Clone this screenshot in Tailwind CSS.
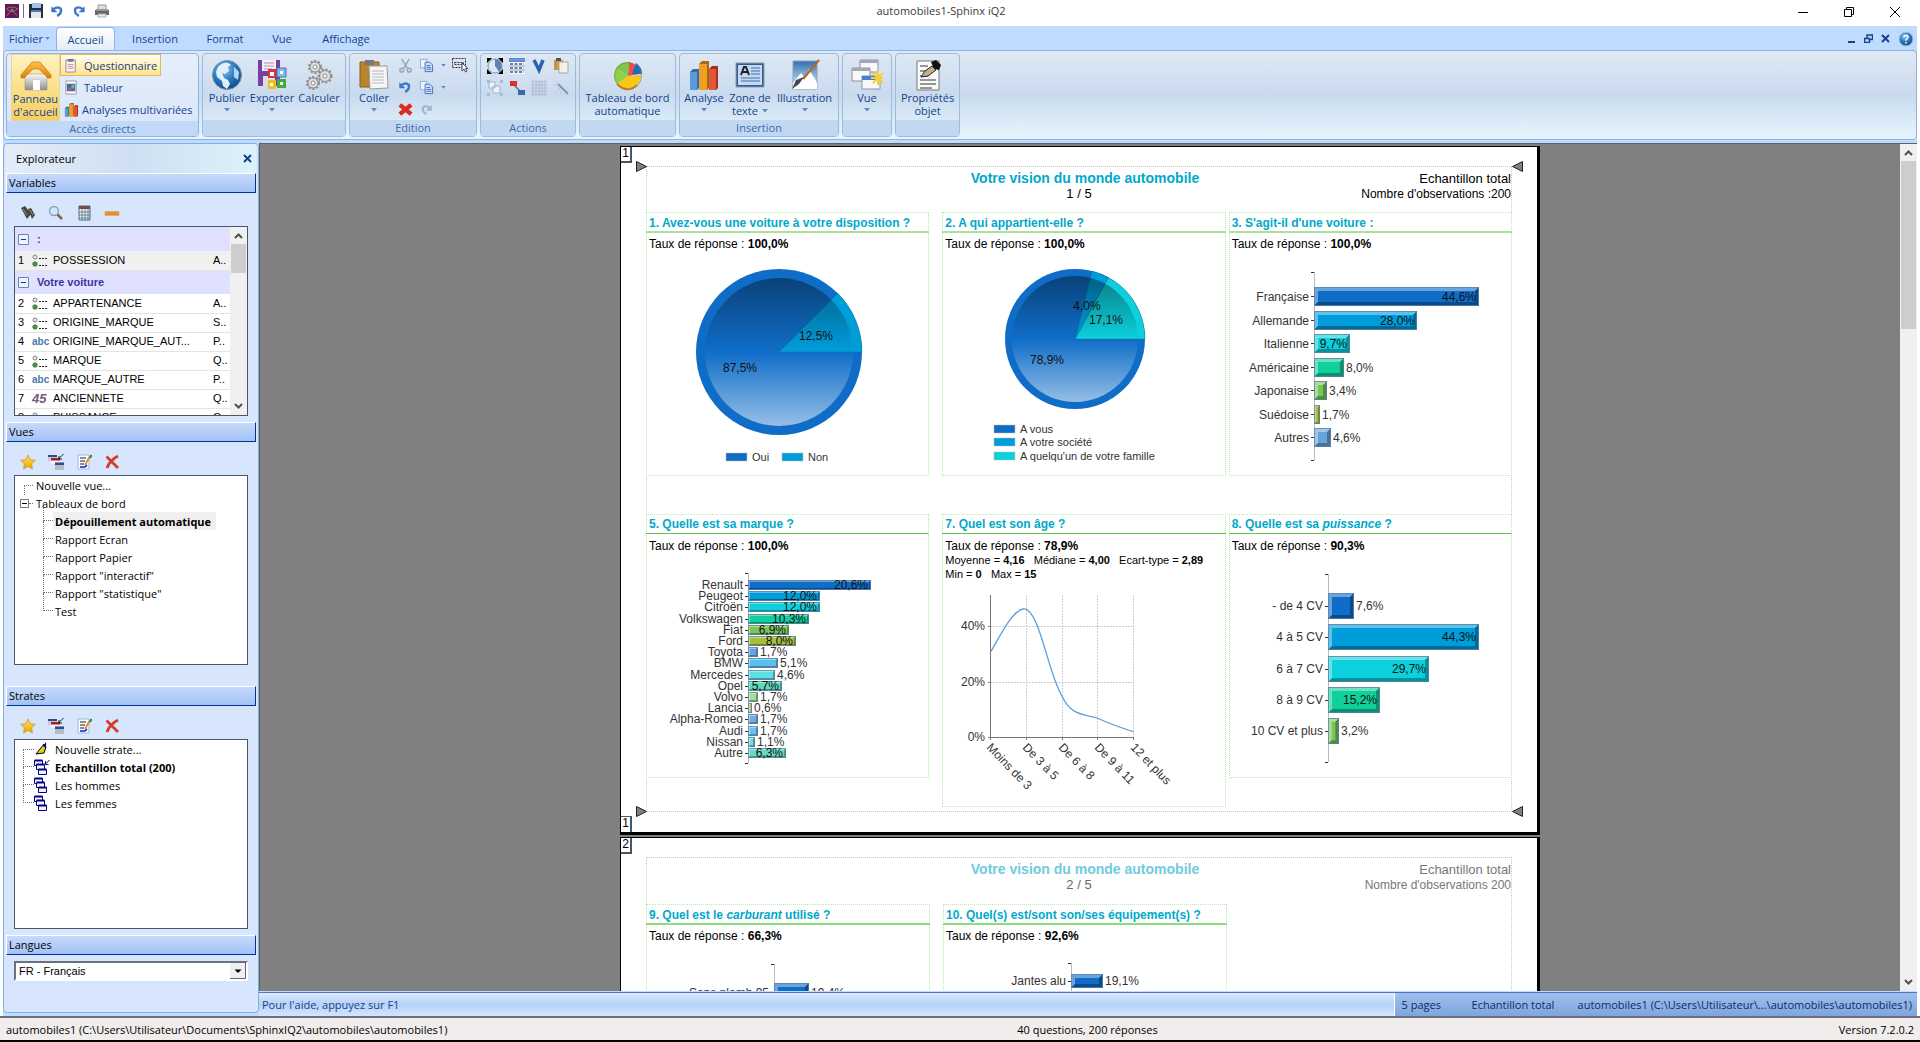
<!DOCTYPE html>
<html lang="fr">
<head>
    <meta charset="UTF-8">
    <meta name="viewport" content="width=device-width, initial-scale=1.0">
    <title>automobiles1-Sphinx iQ2</title>
    <script src="https://cdn.jsdelivr.net/npm/@tailwindcss/browser@4"></script>
</head>
<body class="h-screen flex flex-col overflow-hidden bg-white text-[11px] leading-[13px] text-black font-['Open_Sans','Noto_Sans',sans-serif]">

    <!-- Shared icons -->
    <svg class="absolute w-0 h-0">
        <defs>
            <linearGradient id="gold" x1="0" y1="0" x2="0" y2="1"><stop offset="0" stop-color="#ffe066"/><stop offset="1" stop-color="#f0a500"/></linearGradient>
            <linearGradient id="orange" x1="0" y1="0" x2="0" y2="1"><stop offset="0" stop-color="#ffc04d"/><stop offset="1" stop-color="#e08200"/></linearGradient>
            <linearGradient id="grey" x1="0" y1="0" x2="0" y2="1"><stop offset="0" stop-color="#fafafa"/><stop offset="1" stop-color="#8e8e8e"/></linearGradient>
            <linearGradient id="sky" x1="0" y1="0" x2="0" y2="1"><stop offset="0" stop-color="#2f6fb0"/><stop offset="1" stop-color="#e8f4ff"/></linearGradient>
            <radialGradient id="globe" cx=".4" cy=".3" r=".8"><stop offset="0" stop-color="#8cc8f4"/><stop offset=".5" stop-color="#2a78bd"/><stop offset="1" stop-color="#0c3f7c"/></radialGradient>
            <linearGradient id="gloss" x1="0" y1="0" x2="0" y2="1"><stop offset="0" stop-color="#000" stop-opacity=".4"/><stop offset=".5" stop-color="#000" stop-opacity="0"/><stop offset=".5" stop-color="#fff" stop-opacity="0"/><stop offset="1" stop-color="#fff" stop-opacity=".56"/></linearGradient>
        </defs>
        <symbol id="i-arrow" viewBox="0 0 6 4"><path d="M0 0h6L3 3.5z" fill="#5a8ac6"/></symbol>
        <symbol id="i-undo" viewBox="0 0 16 16"><path d="M3 6.500C8 2 13.500 4 12.500 8.500Q12 12 8 13.500" fill="none" stroke="#3f78c8" stroke-width="2.800"/><path d="M1.500 2.500v7h7z" fill="#3f78c8"/></symbol>
        <symbol id="i-redo" viewBox="0 0 16 16"><path d="M13 6.500C8 2 2.500 4 3.500 8.500Q4 12 8 13.500" fill="none" stroke="currentColor" stroke-width="2.600"/><path d="M14.500 2.500v7h-7z" fill="currentColor"/></symbol>
        <symbol id="i-copy" viewBox="0 0 16 16"><path d="M1.500 1.500h7v9h-7z" fill="#eef5ff" stroke="#8aa8d8"/><path d="M6.500 4.500h5l3 3v7h-8z" fill="#cfe0fb" stroke="#3f6fc0"/><path d="M8 8h4M8 10h5M8 12h5" stroke="#3f6fc0"/></symbol>
        <symbol id="i-bars" viewBox="0 0 32 32"><path d="M2 13l3-3h6v19l-2 2H2z" fill="#2f6fae"/><path d="M2 13h7v18H2z" fill="#5b9bd6"/><path d="M11 5l3-3h7v27l-2 2h-8z" fill="#a86a0c"/><path d="M11 5h8v26h-8z" fill="#eda024"/><path d="M21 10l3-3h6v22l-2 2h-7z" fill="#a8301a"/><path d="M21 10h7v21h-7z" fill="#e2553a"/></symbol>
        <symbol id="i-clip" viewBox="0 0 16 16"><path d="M2 2h10v13H2z" fill="#f4f4f4" stroke="#8a8a8a"/><path d="M4 1h6v3H4z" fill="#777"/><path d="M4 7h6M4 9h6M4 11h6" stroke="#e08a8a"/></symbol>
        <symbol id="i-star" viewBox="0 0 16 16"><path d="M8 1l2.200 4.700 5.100.6-3.800 3.500 1 5.100L8 12.400l-4.500 2.500 1-5.100L.7 6.300l5.100-.6z" fill="url(#gold)" stroke="#c89a1c" stroke-width=".8"/></symbol>
        <symbol id="i-wins" viewBox="0 0 16 16"><path d="M0 1h9v6H0z" fill="#c8cdd8"/><path d="M0 1h9v2H0z" fill="#2c4a8c"/><path d="M3 4h9v6H3z" fill="#f4f4f4"/><path d="M3 4h9v2.500H3z" fill="#9c2020"/><path d="M7 9h9v7H7z" fill="#b8bcc4"/><path d="M7 8.500h9V11H7z" fill="#2c4a8c"/><path d="M15.500 0l-4 4M11 2v3h3" stroke="#222" fill="none"/></symbol>
        <symbol id="i-edit" viewBox="0 0 16 16"><path d="M2 1h11v14H2z" fill="#f7fbff" stroke="#9ab8dc"/><path d="M4 4h6M4 7h5M4 10h4" stroke="#222" stroke-width="1.200"/><path d="M4 13h5l2-2" stroke="#1414e0" fill="none" stroke-width="1.500"/><path d="M13.500 3L9 11" stroke="#e88a1c" stroke-width="2"/><path d="M14 4l1.500-3" stroke="#2f8a3c" stroke-width="2"/></symbol>
        <symbol id="i-del" viewBox="0 0 16 16"><path d="M2.500 2.500L14 14M14 2Q6 6 3 14" stroke="#d23c2c" stroke-width="2.800" fill="none"/></symbol>
        <symbol id="i-single" viewBox="0 0 16 14"><circle cx="3" cy="4" r="2" fill="#ececec" stroke="#666" stroke-width=".8"/><circle cx="3" cy="11" r="2.300" fill="#3a9a4a" stroke="#226a2e" stroke-width=".6"/><path d="M7 5.500h2m1 0h2m1 0h2M7 12.500h2m1 0h2m1 0h2" stroke="#222"/></symbol>
        <symbol id="i-box" viewBox="0 0 11 11"><path d="M.5.5h10v10H.5z" fill="#eef4ff" stroke="#6e86b4"/><path d="M3 5.500h5" stroke="#1c3a7a"/></symbol>
        <symbol id="i-strate" viewBox="0 0 14 16"><g fill="#f4f4f4" stroke="#00008b"><path d="M.5 1.500h8v5h-8z"/><path d="M.5 1.500h8" stroke-width="2"/><path d="M2.500 5.500h8v5h-8z"/><path d="M2.500 5.500h8" stroke-width="2"/><path d="M4.500 10.500h8v5h-8z"/><path d="M4.500 10.500h8" stroke-width="2"/></g></symbol>
    </svg>

    <!-- Title bar -->
    <header class="grid grid-cols-[1fr_auto_1fr] items-start h-[26px] shrink-0">
        <div class="flex items-center gap-[6px] pl-[5px] pt-[3px]">
            <svg class="size-[14px]" viewBox="0 0 14 14"><path d="M0 0h14v14H0z" fill="#5e1a5c"/><path d="M1 5q6-4 12 0M2 5.500q5 4 10 0M5 8l-3 4M8 8l4 3" stroke="#c8603c" fill="none"/><circle cx="7" cy="6" r="1.500" fill="#2c9ab4"/></svg>
            <span class="w-px h-[14px] bg-gray-500 -ml-0.5"></span>
            <button class="-ml-0.5" aria-label="Enregistrer"><svg class="size-4" viewBox="0 0 16 16"><path d="M1 1h14v14H1z" fill="#2b3038"/><path d="M4 0h9v5H4z" fill="#9ec4e8"/><path d="M3 7h10v3H3z" fill="#3f7ec0"/><path d="M3 9h10v6H3z" fill="#e4e8ec"/></svg></button>
            <button aria-label="Annuler"><svg class="size-[14px]"><use href="#i-undo"/></svg></button>
            <button class="ml-0.5 text-[#3f78c8]" aria-label="Rétablir"><svg class="size-[14px]"><use href="#i-redo"/></svg></button>
            <button class="ml-0.5" aria-label="Imprimer"><svg class="size-4" viewBox="0 0 16 16"><path d="M4 2h8v5H4z" fill="#ddd" stroke="#999"/><path d="M1 7h14v5H1z" fill="#666"/><path d="M2 6h12v2H2z" fill="#999"/><path d="M4 11h8v3H4z" fill="#eee" stroke="#aaa"/></svg></button>
        </div>
        <h1 class="pt-[4px] pr-[38px] text-[#3a3a3a]">automobiles1-Sphinx iQ2</h1>
        <div class="flex justify-end gap-[32px] pr-[18px] pt-[5px]">
            <button aria-label="Réduire"><svg class="size-[14px]" viewBox="0 0 14 14"><path d="M2 7.500h10" stroke="#000"/></svg></button>
            <button aria-label="Restaurer"><svg class="size-[14px]" viewBox="0 0 14 14"><path d="M2.500 4.500h7v7h-7zM4.500 4.500v-2h7v7h-2" stroke="#000" fill="none"/></svg></button>
            <button aria-label="Fermer"><svg class="size-[14px]" viewBox="0 0 14 14"><path d="M2 2l10 10M12 2L2 12" stroke="#000"/></svg></button>
        </div>
    </header>

    <div class="flex flex-col flex-1 min-h-0 ml-[3px] mr-[3px] bg-[#bfdbff]">

        <!-- Ribbon tabs -->
        <nav class="flex h-[24px] shrink-0 text-[#15428b] pl-[6px] pt-px">
            <button class="flex items-center gap-0.5 w-[47px]">Fichier<svg class="w-[5px] h-[3px]"><use href="#i-arrow"/></svg></button>
            <button class="w-[59px] rounded-t border border-b-0 border-[#8db2e3] bg-gradient-to-b from-white to-[#e3edf9]">Accueil</button>
            <button class="w-[80px]">Insertion</button>
            <button class="w-[60px]">Format</button>
            <button class="w-[54px]">Vue</button>
            <button class="w-[74px]">Affichage</button>
            <div class="flex items-center gap-[8px] ml-auto pr-[3px] text-[#15428b]">
                <button aria-label="Réduire la fenêtre"><svg class="size-[9px]" viewBox="0 0 9 9"><path d="M1 8h7" stroke="currentColor" stroke-width="2"/></svg></button>
                <button aria-label="Restaurer la fenêtre"><svg class="size-[9px]" viewBox="0 0 9 9"><path d="M.5 4.500h5v4h-5zM3 4V1h5.500v4.500H6" stroke="currentColor" fill="none" stroke-width="1.500"/></svg></button>
                <button aria-label="Fermer la fenêtre"><svg class="size-[9px]" viewBox="0 0 9 9"><path d="M1 1l7 7M8 1L1 8" stroke="currentColor" stroke-width="2"/></svg></button>
                <button aria-label="Aide"><svg class="size-4" viewBox="0 0 16 16"><circle cx="8" cy="8" r="7" fill="url(#globe)" stroke="#a8c4de"/><path d="M6 6.500Q6 4.500 8 4.500t2 1.800q0 1-2 2.500v1M8 11v1.500" stroke="#fff" fill="none" stroke-width="1.500"/></svg></button>
            </div>
        </nav>

        <!-- Ribbon -->
        <div class="flex gap-[3px] h-[90px] shrink-0 px-[2px] py-[2px] border border-[#8db2e3] rounded bg-gradient-to-b from-[#dfe9f5] via-[#c9daee] to-[#e6f6ff] text-[#15428b] text-center whitespace-nowrap">

            <section class="flex flex-col w-[193px] border border-[#8db2e3] rounded bg-gradient-to-b from-[#e6eef9] to-[#d7e6fb]">
                <div class="flex flex-1 pl-1">
                    <button class="flex flex-col items-center w-[49px] h-[67px] pt-1 border border-[#e8d398] bg-gradient-to-b from-[#fdf3c4] via-[#fbe08a] to-[#f7cf62]">
                        <svg class="size-[32px] mt-px" viewBox="0 0 32 32"><path d="M5 14h22v16H5z" fill="url(#grey)" stroke="#888" stroke-width=".5"/><path d="M13 20h7v10h-7z" fill="#fff"/><path d="M1 15L12 2h8l11 13v3h-3l-9-9h-6l-9 9H1z" fill="url(#orange)" stroke="#a86a0c" stroke-width=".6"/></svg>
                        <span>Panneau<br>d'accueil</span>
                    </button>
                    <div class="flex flex-col items-start">
                        <button class="flex items-center gap-[5px] h-[22px] px-[3px] border border-[#e2b85c] bg-gradient-to-b from-[#fffdf0] to-[#ffe28a]"><svg class="size-[15px]"><use href="#i-clip"/></svg>Questionnaire</button>
                        <button class="flex items-center gap-[5px] h-[22px] px-1"><svg class="size-[15px]" viewBox="0 0 16 16"><path d="M2 1h11v14H2z" fill="#fff" stroke="#999"/><path d="M3 4h9v8H3z" fill="#3a6ab0"/><path d="M4 8h4v3H4z" fill="#d04c8a"/><path d="M8 5h3v4H8z" fill="#6ac06a"/></svg>Tableur</button>
                        <button class="flex items-center gap-[3px] h-[22px] px-1"><svg class="size-[15px]"><use href="#i-bars"/></svg>Analyses multivariées</button>
                    </div>
                </div>
                <h2 class="h-4 pt-px bg-[#c1d9f7] text-[#3e6aaa]">Accès directs</h2>
            </section>

            <section class="flex flex-col w-[144px] border border-[#9bbbe0] rounded">
                <div class="flex flex-1 pl-[3px] pt-1">
                    <button class="flex flex-col items-center w-[42px]"><svg class="size-[32px] mt-px" viewBox="0 0 32 32"><circle cx="16" cy="16" r="14.500" fill="url(#globe)" stroke="#7a93ac"/><path d="M7 8q5-5 10-4l3 2-3 2 1 4-4 3-3-1 2 5 4 2 2 4-3 5-4-3-1-5-5-4-1-5z" fill="#dff0fb"/><path d="M23 8l5 5-1 8-4-3z" fill="#b4daf2"/></svg><span>Publier</span><svg class="w-[6px] h-1 mt-1"><use href="#i-arrow"/></svg></button>
                    <button class="flex flex-col items-center w-[48px]"><svg class="size-[32px] mt-px" viewBox="0 0 32 32"><path d="M2 1h22v24l-3 2H2z" fill="#7a3fa0"/><path d="M6 1h14v11H6z" fill="#f2f2f2"/><path d="M8 4h10M8 7h10M8 10h8" stroke="#b08ac8"/><path d="M7 17h12v10H7z" fill="#ddd"/><path d="M12 10h8v9h-8z" fill="#d8362c"/><path d="M21 9h9v9h-9z" fill="#88b8e8" stroke="#3f7ac0"/><path d="M12 21h8v9h-8z" fill="#f0c020"/><path d="M21 20h9v9h-9z" fill="#3fae3a"/><path d="M14 13h4v4h-4zM24 12h3v3h-3zM14 24h3v3h-3zM24 23h3v3h-3z" fill="#fff"/></svg><span>Exporter</span><svg class="w-[6px] h-1 mt-1"><use href="#i-arrow"/></svg></button>
                    <button class="flex flex-col items-center w-[46px]"><svg class="size-[32px] mt-px" viewBox="0 0 32 32" fill="none" stroke="#8c8c8c"><g stroke-dasharray="2 1.500" stroke-width="3"><circle cx="12" cy="8" r="5.500"/><circle cx="22" cy="17" r="6"/><circle cx="10" cy="24" r="5.500"/></g><g fill="#dedede"><circle cx="12" cy="8" r="5"/><circle cx="22" cy="17" r="5.500"/><circle cx="10" cy="24" r="5"/></g><g fill="#fff"><circle cx="12" cy="8" r="2"/><circle cx="22" cy="17" r="2"/><circle cx="10" cy="24" r="2"/></g></svg><span>Calculer</span></button>
                </div>
                <div class="h-4 bg-[#c1d8f0]"></div>
            </section>

            <section class="flex flex-col w-[128px] border border-[#9bbbe0] rounded">
                <div class="flex flex-1 pl-1">
                    <button class="flex flex-col items-center w-[40px] pt-1"><svg class="size-[32px] mt-px" viewBox="0 0 32 32"><path d="M2 3h19v25H2z" fill="#b8842c" stroke="#8a5c14"/><path d="M7 1h9v5H7z" fill="#777"/><path d="M11 7h18l1 22-18 1z" fill="#f6f6f6" stroke="#999"/><path d="M14 12h12M14 15h12M14 18h12M14 21h12M14 24h12" stroke="#b8b8b8"/></svg><span>Coller</span><svg class="w-[6px] h-1 mt-1"><use href="#i-arrow"/></svg></button>
                    <div class="grid grid-cols-[22px_20px_14px_20px] grid-rows-3 h-[66px] items-center justify-items-center">
                        <button aria-label="Couper"><svg class="size-[15px]" viewBox="0 0 16 16" fill="none" stroke="#9aa8b8" stroke-width="1.600"><path d="M4 1l6 10M12 1L6 11"/><circle cx="4" cy="13" r="2"/><circle cx="12" cy="13" r="2"/></svg></button>
                        <button aria-label="Copier"><svg class="size-[15px]"><use href="#i-copy"/></svg></button>
                        <svg class="w-[5px] h-[3px]"><use href="#i-arrow"/></svg>
                        <button aria-label="Sélectionner"><svg class="size-4" viewBox="0 0 16 16"><path d="M.5 1.500h13v9H.5zM2.500 5.500h9v2h-9z" fill="none" stroke="#333" stroke-dasharray="2 1"/><path d="M10 6v8l2-2 1.500 3 1.500-1-1.500-2.500H16z" fill="#fff" stroke="#446"/></svg></button>
                        <button aria-label="Annuler l'action"><svg class="size-[14px]"><use href="#i-undo"/></svg></button>
                        <button aria-label="Copier le format"><svg class="size-[15px]"><use href="#i-copy"/></svg></button>
                        <svg class="w-[5px] h-[3px]"><use href="#i-arrow"/></svg>
                        <span></span>
                        <button aria-label="Effacer"><svg class="size-[15px]" viewBox="0 0 16 16"><path d="M2 3l12 10M14 3L2 13" stroke="#dc2820" stroke-width="4.500"/></svg></button>
                        <button class="text-[#a4b4c8]" aria-label="Rétablir l'action"><svg class="size-[13px]"><use href="#i-redo"/></svg></button>
                    </div>
                </div>
                <h2 class="h-4 pt-px bg-[#c1d8f0] text-[#3e6aaa]">Edition</h2>
            </section>

            <section class="flex flex-col w-[96px] border border-[#9bbbe0] rounded">
                <div class="grid grid-cols-4 gap-y-[6px] content-start justify-items-center flex-1 px-[3px] pt-[4px]">
                    <button aria-label="Graphique"><svg class="size-4" viewBox="0 0 16 16"><path d="M0 0h5L0 5zM11 0h5v5zM0 11v5h5zM16 11v5h-5z" fill="#000"/><circle cx="8" cy="8" r="7" fill="#dfe8f6" stroke="#7f93b4"/><path d="M8 8V1a7 7 0 0 1 4 12.500z" fill="#6680b4"/></svg></button>
                    <button aria-label="Tableau"><svg class="size-4" viewBox="0 0 16 16"><path d="M0 0h16v4H0z" fill="#5c8ad0"/><path d="M0 4h16v12H0z" fill="#f4f8ff"/><path d="M0 2h16M0 8h16M0 12h16" stroke="#7ca4dc"/><path d="M1 6h14M1 10h14M1 14h14" stroke="#556" stroke-dasharray="3 1.500" stroke-width="1.400"/></svg></button>
                    <button aria-label="Verbatim"><svg class="size-4" viewBox="0 0 16 16"><path d="M3 2l5 10 4-10" fill="none" stroke="#2c5fb0" stroke-width="3.500"/></svg></button>
                    <button aria-label="Coller le style"><svg class="size-4" viewBox="0 0 16 16"><path d="M1 2h9v10H1z" fill="#c8943c"/><path d="M3 0h5v3H3z" fill="#555"/><path d="M6 4h9v11H6z" fill="#f4f0e8" stroke="#aaa"/></svg></button>
                    <button aria-label="Grouper"><svg class="size-4" viewBox="0 0 16 16"><path d="M2 2h6v6H2zM6 6h7v7H6z" fill="#eef3fa" stroke="#9fb4d2"/><path d="M0 0h3v3H0zM13 0h3v3h-3zM0 13h3v3H0zM13 13h3v3h-3z" fill="#a8bad4"/></svg></button>
                    <button aria-label="Lier"><svg class="size-4" viewBox="0 0 16 16"><path d="M5 5l6 6" stroke="#8a6a5c" stroke-width="1.500"/><path d="M1 1h7v5H1z" fill="#d8302c"/><path d="M9 10h7v5H9z" fill="#3c68a8"/></svg></button>
                    <button aria-label="Grille"><svg class="size-4" viewBox="0 0 16 16"><path d="M2 0v16M5 0v16M8 0v16M11 0v16M14 0v16M0 2h16M0 5h16M0 8h16M0 11h16M0 14h16" stroke="#a8b8d0" stroke-width=".8"/></svg></button>
                    <button aria-label="Baguette"><svg class="size-4" viewBox="0 0 16 16"><path d="M5 4l10 10" stroke="#8494b0" stroke-width="2"/><path d="M4 1v3M1 5h3M2 14l4-6 3 7" stroke="#a8b8d0" stroke-dasharray="1 1" fill="none"/></svg></button>
                </div>
                <h2 class="h-4 pt-px bg-[#c1d8f0] text-[#3e6aaa]">Actions</h2>
            </section>

            <section class="flex flex-col w-[97px] border border-[#9bbbe0] rounded">
                <button class="flex flex-col items-center flex-1 pt-1"><svg class="size-[32px] mt-px" viewBox="0 0 32 32"><path d="M16 17L4 9Q9 2 17 3z" fill="#7cc84a"/><path d="M16 17L17 3q8 1 11 12z" fill="#e8504a"/><path d="M16 17L4 9Q0 18 5 25z" fill="#8cd04c"/><path d="M16 17L5 25q10 10 20 1 4-5 4-10z" fill="#f6c81c"/><path d="M5 25q10 10 20 1" fill="none" stroke="#d8801c" stroke-width="2"/><path d="M20 15l4-11q6 4 6 11z" fill="#1c6cc0"/><circle cx="16" cy="17" r="13.500" fill="none" stroke="#8a7a30" stroke-width=".6"/></svg><span>Tableau de bord<br>automatique</span></button>
                <div class="h-4 bg-[#c1d8f0]"></div>
            </section>

            <section class="flex flex-col w-[160px] border border-[#9bbbe0] rounded">
                <div class="flex flex-1 pl-px pt-1">
                    <button class="flex flex-col items-center w-[46px]"><svg class="size-[32px] mt-px"><use href="#i-bars"/></svg><span>Analyse</span><svg class="w-[6px] h-1 mt-1"><use href="#i-arrow"/></svg></button>
                    <button class="flex flex-col items-center w-[46px]"><svg class="size-[32px] mt-px" viewBox="0 0 32 32"><path d="M2 4h28v24H2z" fill="#3c5a8c" stroke="#8c9cb4"/><path d="M4 6h24v20H4z" fill="#c4daf4"/><path d="M7 16l3-8h2l3 8M8 13h6" stroke="#222" stroke-width="2" fill="none"/><path d="M17 9h9M17 12h9M17 15h9M7 19h19M7 22h19" stroke="#3c6cb0"/></svg><span>Zone de</span><span class="flex items-center gap-1">texte<svg class="w-[6px] h-1"><use href="#i-arrow"/></svg></span></button>
                    <button class="flex flex-col items-center w-[63px]"><svg class="size-[32px] mt-px" viewBox="0 0 32 32"><path d="M4 2h24v28H4z" fill="url(#sky)" stroke="#90a0b0"/><path d="M4 24l8-10 4 5 4-9 8 14v6H4z" fill="#fff"/><path d="M30 1L14 20" stroke="#b46a2c" stroke-width="2.500"/><path d="M15 18l-5 7-7 5 4-9z" fill="#3a4a60"/></svg><span>Illustration</span><svg class="w-[6px] h-1 mt-1"><use href="#i-arrow"/></svg></button>
                </div>
                <h2 class="h-4 pt-px bg-[#c1d8f0] text-[#3e6aaa]">Insertion</h2>
            </section>

            <section class="flex flex-col w-[50px] border border-[#9bbbe0] rounded">
                <button class="flex flex-col items-center flex-1 pt-1"><svg class="size-[32px] mt-px" viewBox="0 0 32 32"><g fill="#f8f8f8" stroke="#8a94a4"><path d="M9 1h18v12H9z"/><path d="M1 9h18v13H1z"/><path d="M11 17h18v13H11z"/></g><path d="M9 1h18v3H9zM1 9h18v3H1z" fill="#a0a8b8"/><path d="M11 17h18v4H11z" fill="#4c7cd8"/><path d="M27 12v14M20 19h13M22 14l10 10M32 14L22 24" stroke="#f4d030" stroke-width="2"/></svg><span>Vue</span><svg class="w-[6px] h-1 mt-1"><use href="#i-arrow"/></svg></button>
                <div class="h-4 bg-[#c1d8f0]"></div>
            </section>

            <section class="flex flex-col w-[65px] border border-[#9bbbe0] rounded">
                <button class="flex flex-col items-center flex-1 pt-1"><svg class="size-[32px] mt-px" viewBox="0 0 32 32"><path d="M5 2h22v29H5z" fill="#fafafa" stroke="#777"/><path d="M8 7h8M8 12h8M8 17h8M8 21h16M8 25h16M8 29h12" stroke="#333"/><path d="M19 3l5-2 5 5-2 5-5-1z" fill="#111"/><path d="M20 7l4 4-8 6-7 1 4-6z" fill="#c0b090" stroke="#222"/></svg><span>Propriétés<br>objet</span></button>
                <div class="h-4 bg-[#c1d8f0]"></div>
            </section>
        </div>

        <div class="flex flex-1 min-h-0 pt-[3px]">

            <!-- Explorer -->
            <aside class="flex flex-col w-[256px] shrink-0 mb-[3px] pl-[2px] pr-[2px] border border-[#7fb0e6] rounded bg-[#d7e6fc]">
                <div class="flex items-center justify-between h-[29px] pl-[10px] pr-[4px] bg-gradient-to-r from-[#e4edf8] via-[#cfdff2] to-[#dcf2fb]">
                    <h2>Explorateur</h2>
                    <button class="text-[#15428b]" aria-label="Fermer l'explorateur"><svg class="size-[9px]" viewBox="0 0 9 9"><path d="M1 1l7 7M8 1L1 8" stroke="currentColor" stroke-width="2"/></svg></button>
                </div>

                <h3 class="h-[20px] pl-[2px] pt-[2px] border border-t-white border-l-white border-b-[#003399] border-r-[#003399] bg-gradient-to-b from-[#c6dafb] to-[#a3c2f5]">Variables</h3>
                <div class="flex items-center gap-3 h-[33px] pl-[14px] pt-[6px]">
                    <button aria-label="Rechercher"><svg class="size-4" viewBox="0 0 16 16"><path d="M1 3l4-2 6 8-4 5zM8 4l3-1 4 7-3 4z" fill="#4a4440"/><path d="M3 4l4 6M10 5l3 5" stroke="#9a948c"/></svg></button>
                    <button aria-label="Zoom"><svg class="size-4" viewBox="0 0 16 16"><path d="M9 9l5 5" stroke="#7a6a50" stroke-width="2.500"/><circle cx="6" cy="6" r="4.500" fill="#cfe8fb" stroke="#8aa0b4" stroke-width="1.300"/></svg></button>
                    <button aria-label="Dictionnaire"><svg class="size-4" viewBox="0 0 16 16"><path d="M3 1h11v14H3z" fill="#f4f8f4" stroke="#4a6a80"/><path d="M3 1h11v3H3z" fill="#7a4a4a"/><path d="M6 4v11M9 4v11M12 4v11M3 7h11M3 10h11M3 13h11" stroke="#4a6a80" stroke-width=".8"/></svg></button>
                    <button aria-label="Réduire la liste"><svg class="size-4" viewBox="0 0 16 16"><path d="M1 6.500h14v4H1z" fill="#f08c2c" stroke="#d8a064" stroke-width=".6"/></svg></button>
                </div>
                <div class="flex h-[190px] mx-2 border border-gray-600 bg-white overflow-hidden font-['Liberation_Sans',Arial,sans-serif]">
                    <table class="w-[215px] table-fixed self-start text-left text-[11px]">
                        <colgroup><col class="w-[17px]"><col class="w-[21px]"><col><col class="w-[17px]"></colgroup>
                        <tbody id="variables"></tbody>
                    </table>
                    <div class="flex flex-col w-[17px] items-center bg-[#f0f0f0]">
                        <svg class="size-[17px]" viewBox="0 0 17 17"><path d="M5 11l3.500-3.500L12 11" stroke="#505050" stroke-width="2" fill="none"/></svg>
                        <div class="w-[15px] h-[29px] bg-[#cdcdcd]"></div>
                        <svg class="size-[17px] mt-auto" viewBox="0 0 17 17"><path d="M5 6l3.500 3.500L12 6" stroke="#505050" stroke-width="2" fill="none"/></svg>
                    </div>
                </div>

                <h3 class="h-[20px] mt-[6px] pl-[2px] pt-[2px] border border-t-white border-l-white border-b-[#003399] border-r-[#003399] bg-gradient-to-b from-[#c6dafb] to-[#a3c2f5]">Vues</h3>
                <div class="flex items-center gap-3 h-[33px] pl-[14px] pt-[6px]">
                    <button aria-label="Nouvelle vue"><svg class="size-4"><use href="#i-star"/></svg></button>
                    <button aria-label="Dupliquer la vue"><svg class="size-4"><use href="#i-wins"/></svg></button>
                    <button aria-label="Modifier la vue"><svg class="size-4"><use href="#i-edit"/></svg></button>
                    <button aria-label="Supprimer la vue"><svg class="size-4"><use href="#i-del"/></svg></button>
                </div>
                <ul class="h-[190px] mx-2 border border-gray-600 bg-white">
                    <li class="flex items-center h-[18px] pl-[9px]"><span class="w-[9px] h-[10px] mr-[3px] mt-[9px] border-t border-l border-dotted border-gray-500"></span><button>Nouvelle vue...</button></li>
                    <li class="flex items-center h-[18px] pl-[5px]"><svg class="size-[9px]" viewBox="0 0 9 9"><path d="M.5.500h8v8h-8z" fill="#fff" stroke="#777"/><path d="M2 4.500h5" stroke="#000"/></svg><span class="w-1 mr-[3px] border-t border-dotted border-gray-500"></span><button>Tableaux de bord</button></li>
                    <li>
                        <ul class="ml-[28px] [&>li]:flex [&>li]:items-center [&>li]:h-[18px] [&>li>span]:w-[10px] [&>li>span]:h-[18px] [&>li>span]:-mt-[18px] [&>li>span]:border-b [&>li>span]:border-l [&>li>span]:border-dotted [&>li>span]:border-gray-500">
                            <li><span></span><button class="h-[18px] pl-[2px] pr-[5px] bg-[#f0f0f0] font-bold">Dépouillement automatique</button></li>
                            <li><span></span><button class="pl-[2px]">Rapport Ecran</button></li>
                            <li><span></span><button class="pl-[2px]">Rapport Papier</button></li>
                            <li><span></span><button class="pl-[2px]">Rapport "interactif"</button></li>
                            <li><span></span><button class="pl-[2px]">Rapport "statistique"</button></li>
                            <li><span></span><button class="pl-[2px]">Test</button></li>
                        </ul>
                    </li>
                </ul>

                <h3 class="h-[20px] mt-[21px] pl-[2px] pt-[2px] border border-t-white border-l-white border-b-[#003399] border-r-[#003399] bg-gradient-to-b from-[#c6dafb] to-[#a3c2f5]">Strates</h3>
                <div class="flex items-center gap-3 h-[33px] pl-[14px] pt-[6px]">
                    <button aria-label="Nouvelle strate"><svg class="size-4"><use href="#i-star"/></svg></button>
                    <button aria-label="Dupliquer la strate"><svg class="size-4"><use href="#i-wins"/></svg></button>
                    <button aria-label="Modifier la strate"><svg class="size-4"><use href="#i-edit"/></svg></button>
                    <button aria-label="Supprimer la strate"><svg class="size-4"><use href="#i-del"/></svg></button>
                </div>
                <ul class="h-[190px] mx-2 pl-2 border border-gray-600 bg-white [&>li]:flex [&>li]:items-center [&>li]:h-[18px] [&>li>span]:w-[11px] [&>li>span]:h-[18px] [&>li>span]:-mt-[18px] [&>li>span]:border-b [&>li>span]:border-l [&>li>span]:border-dotted [&>li>span]:border-gray-500 [&>li>svg]:w-[16px] [&>li>svg]:h-[16px] [&>li>svg]:mr-[5px]">
                    <li><i class="w-[11px] h-px border-t border-dotted border-gray-500"></i><svg viewBox="0 0 16 16"><path d="M2 13l8-10 2 3-2 6z" fill="#d8d020" stroke="#000"/><path d="M9 5l3-4v6z" fill="#00008b"/></svg><button>Nouvelle strate...</button></li>
                    <li><span></span><svg class="overflow-visible" viewBox="0 0 16 16"><use href="#i-strate" width="14" height="16"/><path d="M15.500 1l-4 4M11.500 2v3.500h3" stroke="#00008b" fill="none"/></svg><button class="font-bold">Echantillon total (200)</button></li>
                    <li><span></span><svg viewBox="0 0 16 16"><use href="#i-strate" width="14" height="16"/></svg><button>Les hommes</button></li>
                    <li><span></span><svg viewBox="0 0 16 16"><use href="#i-strate" width="14" height="16"/></svg><button>Les femmes</button></li>
                </ul>

                <h3 class="h-[20px] mt-[6px] pl-[2px] pt-[2px] border border-t-white border-l-white border-b-[#003399] border-r-[#003399] bg-gradient-to-b from-[#c6dafb] to-[#a3c2f5]"><label for="langue">Langues</label></h3>
                <div class="relative h-[20px] mt-[6px] mx-2">
                    <select id="langue" class="appearance-none block w-full h-full pl-[3px] border-2 border-t-gray-500 border-l-gray-500 border-b-white border-r-white bg-white text-[11px] font-['Liberation_Sans',Arial,sans-serif]">
                        <option>FR - Français</option>
                    </select>
                    <svg class="absolute right-[2px] top-[2px] w-[16px] h-[16px] pointer-events-none" viewBox="0 0 16 16"><path d="M0 0h16v16H0z" fill="#f0f0f0"/><path d="M15.500 0v15.500H0" stroke="#666" fill="none"/><path d="M4.500 6.500h7L8 10z"/></svg>
                </div>
            </aside>

            <!-- Report view -->
            <main class="flex flex-col flex-1 min-w-0">
                <div class="flex flex-1 min-h-0 border-t border-l border-[#606060] bg-[#808080]">
                    <div class="flex-1 min-w-0 overflow-hidden pt-[2px] font-['Liberation_Sans',Arial,sans-serif]">

                        <article class="relative flex flex-col w-full max-w-[920px] mx-auto mb-[2px] px-[25px] pt-[19px] pb-[20px] border border-r-3 border-b-3 border-black bg-white text-[12px]">
                            <span class="absolute top-0 left-0 w-[11px] h-[16px] border-r-2 border-b-2 border-gray-600 text-center">1</span>
                            <span class="absolute bottom-0 left-0 w-[11px] h-[16px] border-r-2 border-t border-gray-600 text-center">1</span>
                            <svg class="absolute top-[14px] left-[15px] size-[11px]" viewBox="0 0 11 11"><path d="M.5.5l10 5-10 5z" fill="#808080" stroke="#222"/></svg>
                            <svg class="absolute top-[14px] right-[14px] size-[11px]" viewBox="0 0 11 11"><path d="M10.500.5l-10 5 10 5z" fill="#808080" stroke="#222"/></svg>
                            <svg class="absolute bottom-[15px] left-[15px] size-[11px]" viewBox="0 0 11 11"><path d="M.5.5l10 5-10 5z" fill="#808080" stroke="#222"/></svg>
                            <svg class="absolute bottom-[15px] right-[14px] size-[11px]" viewBox="0 0 11 11"><path d="M10.500.5l-10 5 10 5z" fill="#808080" stroke="#222"/></svg>

                            <div class="border border-dotted border-[#c8c8c8]">
                                <div class="grid grid-cols-[1fr_auto_1fr] h-[45px] pt-1">
                                    <div class="col-start-2 text-center text-[13px] leading-[15px]">
                                        <h2 class="pl-3 text-[14px] font-bold text-[#00a9c9]">Votre vision du monde automobile</h2>
                                        <p>1 / 5</p>
                                    </div>
                                    <div class="text-right leading-[17px]"><p class="text-[13px] leading-[15px]">Echantillon total</p><p>Nombre d'observations :200</p></div>
                                </div>
                                <div class="flex -mx-px items-start">
                                    <section class="flex-1 min-w-0 h-[264px] mr-[13px] border border-dotted border-[#b4ecaa]">
                                        <h3 class="h-[20px] -mx-px pl-[3px] pt-[4px] border-b-2 border-[#a9e39a] font-bold text-[#00a9c9]">1. Avez-vous une voiture à votre disposition ?</h3>
                                        <p class="h-[21px] pl-[2px] pt-1 leading-[14px]">Taux de réponse : <b>100,0%</b></p>
                                        <svg id="chart1" class="w-[281px] h-[219px]" viewBox="0 0 281 219"></svg>
                                    </section>
                                    <section class="flex-1 min-w-0 h-[264px] mr-[3px] border border-dotted border-[#b4ecaa]">
                                        <h3 class="h-[20px] -mx-px pl-[3px] pt-[4px] border-b-2 border-[#a9e39a] font-bold text-[#00a9c9]">2. A qui appartient-elle ?</h3>
                                        <p class="h-[21px] pl-[2px] pt-1 leading-[14px]">Taux de réponse : <b>100,0%</b></p>
                                        <svg id="chart2" class="w-[281px] h-[219px]" viewBox="0 0 281 219"></svg>
                                    </section>
                                    <section class="flex-1 min-w-0 h-[264px] border border-dotted border-[#b4ecaa]">
                                        <h3 class="h-[20px] -mx-px pl-[3px] pt-[4px] border-b-2 border-[#a9e39a] font-bold text-[#00a9c9]">3. S'agit-il d'une voiture :</h3>
                                        <p class="h-[21px] pl-[2px] pt-1 leading-[14px]">Taux de réponse : <b>100,0%</b></p>
                                        <svg id="chart3" class="w-[281px] h-[219px]" viewBox="0 0 281 219"></svg>
                                    </section>
                                </div>
                                <div class="flex -mx-px mt-[38px] mb-[4px] items-start">
                                    <section class="flex-1 min-w-0 h-[264px] mr-[13px] border border-dotted border-[#b4ecaa]">
                                        <h3 class="h-[19px] -mx-px pl-[3px] pt-[3px] border-b border-[#5fc84c] font-bold text-[#00a9c9]">5. Quelle est sa marque ?</h3>
                                        <p class="h-[21px] pl-[2px] pt-[5px] leading-[14px]">Taux de réponse : <b>100,0%</b></p>
                                        <svg id="chart5" class="w-[281px] h-[219px]" viewBox="0 0 281 219"></svg>
                                    </section>
                                    <section class="flex-1 min-w-0 h-[293px] mr-[3px] border border-dotted border-[#b4ecaa]">
                                        <h3 class="h-[19px] -mx-px pl-[3px] pt-[3px] border-b border-[#5fc84c] font-bold text-[#00a9c9]">7. Quel est son âge ?</h3>
                                        <div class="h-[50px] pl-[2px] pt-[5px] leading-[14px] whitespace-pre"><p>Taux de réponse : <b>78,9%</b></p><p class="text-[11px]">Moyenne = <b>4,16</b>   Médiane = <b>4,00</b>   Ecart-type = <b>2,89</b></p><p class="text-[11px]">Min = <b>0</b>   Max = <b>15</b></p></div>
                                        <svg class="w-[281px] h-[219px]" viewBox="0 0 281 219" font-size="12" fill="#333">
                                            <g stroke="#ccc" stroke-dasharray="2 1" fill="none"><path d="M83.500 11v142M119.500 11v142M154.500 11v142M190.500 11v142M47 42.500h144M47 98.500h144"/></g>
                                            <path d="M47.500 11v145M45 153.500h146M45 42.500h3M45 98.500h3M83.500 153v3M119.500 153v3M154.500 153v3M190.500 153v3" stroke="#777" fill="none"/>
                                            <path d="M47 69C57 52 69 27 80 25C96 22 105 90 119 112C128 132 141 130 154 134C167 140 179 144 191 148" stroke="#5b9edb" stroke-width="1.300" fill="none"/>
                                            <g text-anchor="end"><text x="42" y="46">40%</text><text x="42" y="102">20%</text><text x="42" y="157">0%</text></g>
                                            <text transform="translate(43 164) rotate(46)">Moins de 3</text>
                                            <text transform="translate(79 164) rotate(46)">De 3 à 5</text>
                                            <text transform="translate(115 164) rotate(46)">De 6 à 8</text>
                                            <text transform="translate(151 164) rotate(46)">De 9 à 11</text>
                                            <text transform="translate(187 164) rotate(46)">12 et plus</text>
                                        </svg>
                                    </section>
                                    <section class="flex-1 min-w-0 h-[264px] border border-dotted border-[#b4ecaa]">
                                        <h3 class="h-[19px] -mx-px pl-[3px] pt-[3px] border-b border-[#5fc84c] font-bold text-[#00a9c9]">8. Quelle est sa <i>puissance</i> ?</h3>
                                        <p class="h-[21px] pl-[2px] pt-[5px] leading-[14px]">Taux de réponse : <b>90,3%</b></p>
                                        <svg id="chart8" class="w-[281px] h-[219px]" viewBox="0 0 281 219"></svg>
                                    </section>
                                </div>
                            </div>
                        </article>

                        <article class="relative flex flex-col w-full max-w-[920px] mx-auto px-[25px] pt-[19px] border border-r-3 border-black bg-white text-[12px]">
                            <span class="absolute top-0 left-0 w-[11px] h-[16px] border-r-2 border-b-2 border-gray-600 text-center">2</span>
                            <div class="border border-b-0 border-dotted border-[#c8c8c8]">
                                <div class="grid grid-cols-[1fr_auto_1fr] h-[46px] pt-1">
                                    <div class="col-start-2 text-center text-[13px] leading-[15px]">
                                        <h2 class="pl-3 text-[14px] font-bold text-[#6fcbe0]">Votre vision du monde automobile</h2>
                                        <p class="text-[#666]">2 / 5</p>
                                    </div>
                                    <div class="text-right leading-[17px] text-[#777]"><p class="text-[13px] leading-[15px]">Echantillon total</p><p>Nombre d'observations 200</p></div>
                                </div>
                                <div class="flex -mx-px items-start">
                                    <section class="flex-1 min-w-0 h-[264px] mr-[13px] border border-dotted border-[#b4ecaa]">
                                        <h3 class="h-[20px] -mx-px pl-[3px] pt-[4px] border-b-2 border-[#8be07a] font-bold text-[#00a9c9]">9. Quel est le <i>carburant</i> utilisé ?</h3>
                                        <p class="h-[21px] pl-[2px] pt-1 leading-[14px]">Taux de réponse : <b>66,3%</b></p>
                                        <svg id="chart9" class="w-[281px] h-[219px]" viewBox="0 0 281 219"></svg>
                                    </section>
                                    <section class="flex-1 min-w-0 h-[264px] mr-[3px] border border-dotted border-[#b4ecaa]">
                                        <h3 class="h-[20px] -mx-px pl-[3px] pt-[4px] border-b-2 border-[#8be07a] font-bold text-[#00a9c9]">10. Quel(s) est/sont son/ses équipement(s) ?</h3>
                                        <p class="h-[21px] pl-[2px] pt-1 leading-[14px]">Taux de réponse : <b>92,6%</b></p>
                                        <svg id="chart10" class="w-[281px] h-[219px]" viewBox="0 0 281 219"></svg>
                                    </section>
                                    <div class="flex-1"></div>
                                </div>
                            </div>
                        </article>
                    </div>
                    <div class="flex flex-col w-[17px] bg-[#f0f0f0]">
                        <svg class="size-[17px]" viewBox="0 0 17 17"><path d="M5 11l3.500-3.500L12 11" stroke="#505050" stroke-width="2" fill="none"/></svg>
                        <div class="mx-px h-[168px] bg-[#cdcdcd]"></div>
                        <svg class="size-[17px] mt-auto" viewBox="0 0 17 17"><path d="M5 6l3.500 3.500L12 6" stroke="#505050" stroke-width="2" fill="none"/></svg>
                    </div>
                </div>
                <footer class="flex h-[24px] shrink-0 mt-[1px] border-t border-[#4a78c4] bg-gradient-to-b from-[#dce9fb] via-[#b4d2f8] to-[#d4e5fb] text-[#15428b] leading-[24px]">
                    <span class="flex-1 pl-[3px]">Pour l'aide, appuyez sur F1</span>
                    <div class="flex pl-[7px] pr-[5px] border-l border-white bg-gradient-to-b from-[#9fc0ee] to-[#7ea6da] text-[#0c2a6c]">
                        <span class="w-[70px]">5 pages</span><span class="w-[106px]">Echantillon total</span><span>automobiles1 (C:\Users\Utilisateur\...\automobiles\automobiles1)</span>
                    </div>
                </footer>
            </main>
        </div>
    </div>

    <!-- Application status bar -->
    <footer class="grid grid-cols-[53%_1fr_auto] items-center h-[26px] shrink-0 px-[6px] border-t-2 border-t-gray-500 border-b-2 border-b-black bg-[#f0edec]">
        <span>automobiles1 (C:\Users\Utilisateur\Documents\SphinxIQ2\automobiles\automobiles1)</span>
        <span>40 questions, 200 réponses</span>
        <span>Version 7.2.0.2</span>
    </footer>

    <script>
        const variables = [
            { group: ':' },
            { n: 1, type: 'single', name: 'POSSESSION', label: 'A..' },
            { group: 'Votre voiture' },
            { n: 2, type: 'single', name: 'APPARTENANCE', label: 'A..' },
            { n: 3, type: 'single', name: 'ORIGINE_MARQUE', label: 'S..' },
            { n: 4, type: 'abc', name: 'ORIGINE_MARQUE_AUT...', label: 'P..' },
            { n: 5, type: 'single', name: 'MARQUE', label: 'Q..' },
            { n: 6, type: 'abc', name: 'MARQUE_AUTRE', label: 'P..' },
            { n: 7, type: '45', name: 'ANCIENNETE', label: 'Q..' },
            { n: 8, type: 'single', name: 'PUISSANCE', label: 'Q..' }
        ];

        const typeIcons = {
            single: '<svg class="w-4 h-[14px]"><use href="#i-single"/></svg>',
            abc: '<b class="text-[10px] text-[#4a7ab0]">abc</b>',
            45: '<b class="text-[13px] italic text-[#7a5a80]">45</b>'
        };

        document.getElementById('variables').innerHTML = variables.map(v => {
            if (v.group) {
                return `<tr class="h-[24px] bg-[#e0e0ff] text-[#4034a0] font-bold"><td colspan="4" class="pl-[3px]"><span class="flex items-center gap-2"><svg class="size-[11px]"><use href="#i-box"/></svg>${v.group}</span></td></tr>`;
            }
            return `<tr class="h-[19px] border-b border-[#e4e4e0] ${v.n === 1 ? 'bg-[#f0f0f0]' : ''}"><td class="pl-[3px]">${v.n}</td><td class="leading-none">${typeIcons[v.type]}</td><td class="whitespace-nowrap">${v.name}</td><td>${v.label}</td></tr>`;
        }).join('');

        // Beveled horizontal bars. x is the axis position, px the width of one percent
        function barChart(id, o) {
            let out = `<path d="M${o.x + 0.5} ${o.top}V${o.bottom}" stroke="#bbb"/><path d="M${o.x - 3} ${o.top + 0.5}h3M${o.x - 3} ${o.bottom + 0.5}h3" stroke="#333"/>`;
            o.data.forEach(([label, value, color], i) => {
                const y = Math.round(o.first + i * o.step);
                const w = Math.max(2, Math.round(value * o.px));
                const h = o.h;
                const b = Math.min(o.bevel, w / 3);
                const x = o.x;
                const mid = y + h / 2 + 4;
                const inside = value >= o.inside;
                out += `<rect x="${x}" y="${y}" width="${w}" height="${h}" fill="${color}"/>
                    <path d="M${x} ${y}h${w}l${-b} ${b}H${x + b}V${y + h - b}L${x} ${y + h}z" fill="#fff" fill-opacity=".38"/>
                    <path d="M${x + w} ${y}v${h}H${x}l${b} ${-b}H${x + w - b}V${y + b}z" fill="#000" fill-opacity=".3"/>
                    <rect x="${x + 0.5}" y="${y + 0.5}" width="${w - 1}" height="${h - 1}" fill="none" stroke="#5f7fa8" stroke-opacity=".8"/>
                    <path d="M${x - 3} ${y + Math.floor(h / 2) + 0.5}h3" stroke="#333"/>
                    <text x="${x - 5}" y="${mid}" text-anchor="end" fill="#333">${label}</text>
                    <text x="${inside ? x + w - 3 : x + w + 2}" y="${mid}" text-anchor="${inside ? 'end' : 'start'}" fill="${inside ? '#111' : '#333'}">${value.toFixed(1).replace('.', ',')}%</text>`;
            });
            const svg = document.getElementById(id);
            svg.setAttribute('font-size', '12');
            svg.innerHTML = out;
        }

        // Slices run counter-clockwise from three o'clock over a full disc of the main colour
        function pieChart(id, o) {
            let out = `<circle cx="${o.cx}" cy="${o.cy}" r="${o.r}" fill="#0f6dc8"/>`;
            let start = 0;
            o.slices.forEach(([value, color]) => {
                const end = start + value / 100 * 2 * Math.PI;
                const p = a => `${o.cx + o.r * Math.cos(a)} ${o.cy - o.r * Math.sin(a)}`;
                out += `<path d="M${o.cx} ${o.cy}L${p(start)}A${o.r} ${o.r} 0 0 0 ${p(end)}z" fill="${color}" stroke="#1a5a80" stroke-opacity=".5" stroke-width=".7"/>`;
                start = end;
            });
            out += `<circle cx="${o.cx}" cy="${o.cy}" r="${o.inner}" fill="url(#gloss)"/>`;
            o.labels.forEach(([x, y, text]) => out += `<text x="${x}" y="${y}" text-anchor="middle" fill="#111">${text}</text>`);
            o.legend.forEach(([x, y, color, text]) => out += `<rect x="${x}" y="${y}" width="21" height="8" fill="${color}" stroke="#bbb" stroke-width=".5"/><text x="${x + 26}" y="${y + 8}" font-size="11" fill="#333">${text}</text>`);
            const svg = document.getElementById(id);
            svg.setAttribute('font-size', '12');
            svg.innerHTML = out;
        }

        pieChart('chart1', {
            cx: 132, cy: 98, r: 83, inner: 74,
            slices: [[12.5, '#009ddb']],
            labels: [[169, 86, '12,5%'], [93, 118, '87,5%']],
            legend: [[79, 199, '#0f6dc8', 'Oui'], [135, 199, '#009ddb', 'Non']]
        });
        pieChart('chart2', {
            cx: 132, cy: 85, r: 70, inner: 63,
            slices: [[17.1, '#0cd0dc'], [4, '#009ddb']],
            labels: [[163, 70, '17,1%'], [144, 56, '4,0%'], [104, 110, '78,9%']],
            legend: [[51, 171, '#0f6dc8', 'A vous'], [51, 184, '#009ddb', 'A votre société'], [51, 198, '#0cd0dc', "A quelqu'un de votre famille"]]
        });
        barChart('chart3', {
            x: 84, top: 18, bottom: 206, first: 33, step: 23.5, h: 19, px: 3.69, bevel: 4, inside: 9,
            data: [['Française', 44.6, '#0f6dc8'], ['Allemande', 28, '#009ddb'], ['Italienne', 9.7, '#0cd0dc'], ['Américaine', 8, '#10d09c'], ['Japonaise', 3.4, '#78c858'], ['Suédoise', 1.7, '#a8c038'], ['Autres', 4.6, '#68a4dc']]
        });
        barChart('chart5', {
            x: 101, top: 18, bottom: 208, first: 25, step: 11.2, h: 10, px: 5.97, bevel: 2, inside: 5.5,
            data: [['Renault', 20.6, '#0f6dc8'], ['Peugeot', 12, '#009ddb'], ['Citroën', 12, '#0cd0dc'], ['Volkswagen', 10.3, '#10d09c'], ['Fiat', 6.9, '#78c858'], ['Ford', 8, '#a8c038'], ['Toyota', 1.7, '#68a4dc'], ['BMW', 5.1, '#58c0ec'], ['Mercedes', 4.6, '#5ce0e4'], ['Opel', 5.7, '#5cdcbc'], ['Volvo', 1.7, '#a4dc90'], ['Lancia', 0.6, '#c8d484'], ['Alpha-Romeo', 1.7, '#78acdc'], ['Audi', 1.7, '#68c4ec'], ['Nissan', 1.1, '#6ce0e4'], ['Autre', 6.3, '#68dcc0']]
        });
        barChart('chart8', {
            x: 98, top: 19, bottom: 207, first: 38, step: 31.3, h: 26, px: 3.41, bevel: 4, inside: 9,
            data: [['- de 4 CV', 7.6, '#0f6dc8'], ['4 à 5 CV', 44.3, '#009ddb'], ['6 à 7 CV', 29.7, '#0cd0dc'], ['8 à 9 CV', 15.2, '#10d09c'], ['10 CV et plus', 3.2, '#78c858']]
        });
        barChart('chart9', {
            x: 127, top: 18, bottom: 206, first: 37, step: 40, h: 20, px: 1.8, bevel: 4, inside: 30,
            data: [['Sans plomb 95', 19.4, '#0f6dc8']]
        });
        barChart('chart10', {
            x: 127, top: 17, bottom: 206, first: 28, step: 20, h: 14, px: 1.68, bevel: 4, inside: 30,
            data: [['Jantes alu', 19.1, '#0f6dc8']]
        });
    </script>
</body>
</html>
